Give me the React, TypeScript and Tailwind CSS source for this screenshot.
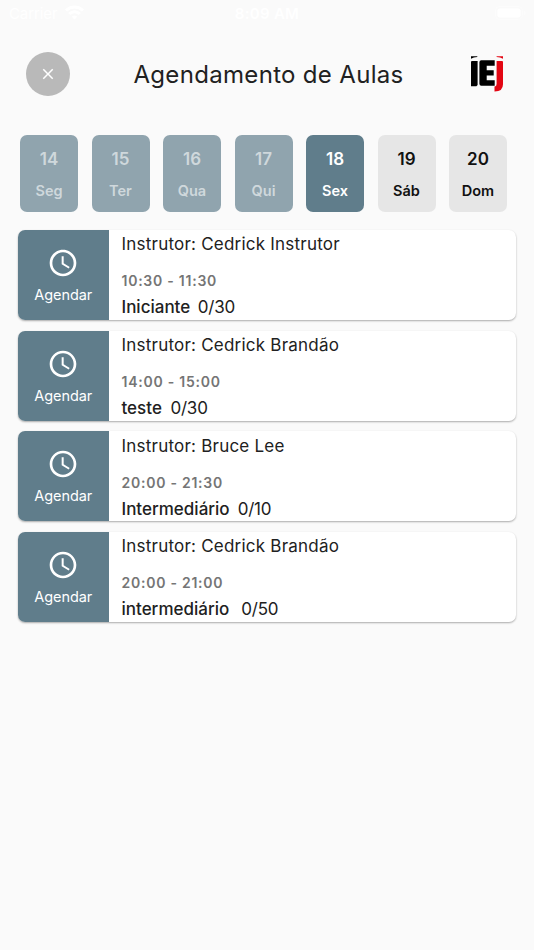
import { MdAccessTime, MdClose } from "react-icons/md";

type Day = {
  number: number;
  label: string;
  state: "past" | "selected" | "upcoming";
};

type Lesson = {
  id: number;
  instructor: string;
  time: string;
  level: string;
  spots: string;
  spotsClass: string;
};

const days: Day[] = [
  { number: 14, label: "Seg", state: "past" },
  { number: 15, label: "Ter", state: "past" },
  { number: 16, label: "Qua", state: "past" },
  { number: 17, label: "Qui", state: "past" },
  { number: 18, label: "Sex", state: "selected" },
  { number: 19, label: "Sáb", state: "upcoming" },
  { number: 20, label: "Dom", state: "upcoming" },
];

const lessons: Lesson[] = [
  { id: 1, instructor: "Cedrick Instrutor", time: "10:30 - 11:30", level: "Iniciante", spots: "0/30", spotsClass: "ml-[7.5px]" },
  { id: 2, instructor: "Cedrick Brandão", time: "14:00 - 15:00", level: "teste", spots: "0/30", spotsClass: "ml-[8.5px]" },
  { id: 3, instructor: "Bruce Lee", time: "20:00 - 21:30", level: "Intermediário", spots: "0/10", spotsClass: "ml-[8px]" },
  { id: 4, instructor: "Cedrick Brandão", time: "20:00 - 21:00", level: "intermediário", spots: "0/50", spotsClass: "ml-[12px]" },
];

const dayStyles = {
  past: "bg-[#90a4ae] text-[#cfd8dc]",
  selected: "bg-[#607d8b] text-white",
  upcoming: "bg-[#e6e6e6] text-[#111]",
};

function StatusBar() {
  return (
    <div className="grid h-[28px] grid-cols-3 items-center px-[9px] text-[15px] text-white">
      <div className="flex items-center gap-[7px]">
        <span className="w-[49px] tracking-[-0.1px]">Carrier</span>
        <svg className="-mt-[3px]" width="19" height="15" viewBox="0 0 19 15" fill="none" stroke="currentColor" strokeWidth="3">
          <path d="M1 5.5a12 12 0 0 1 17 0M4.2 9a7.5 7.5 0 0 1 10.6 0" />
          <path d="M9.5 14.5 6.8 11.8a4 4 0 0 1 5.4 0Z" fill="currentColor" stroke="none" />
        </svg>
      </div>
      <span className="text-center font-semibold tracking-[0.3px]">8:09 AM</span>
      <svg className="-mr-[1px] -mt-[2px] justify-self-end" width="31" height="15" viewBox="0 0 31 15">
        <rect x="0.5" y="0.5" width="27" height="13" rx="4" fill="none" stroke="#fcfcfc" />
        <rect x="2.5" y="2.5" width="23" height="9" rx="2" fill="white" />
        <path d="M29 5v4q1.5-.5 1.5-2T29 5" fill="#fcfcfc" />
      </svg>
    </div>
  );
}

function Logo() {
  return (
    <svg width="34" height="36" viewBox="0 0 34 36" role="img" aria-label="IEJ">
      <path d="M1 0.3h6.3v.6Q3.5 1 1 2.8Z" fill="#000" />
      <path d="M1 6Q1 5 2 5h5.6v24L6.4 30.3H1Z" fill="#000" />
      <path d="M11.3 4.3h13.4v5.4h-8v4.5h7v5.2h-7v4.9h8v5.4H11.3Q9.4 29.7 9.4 27.8V6.2Q9.4 4.3 11.3 4.3Z" fill="#000" />
      <path d="M26.6 0.3H33v2.5Q30.3 1 26.6.9Z" fill="#e30613" />
      <path d="M26.6 5H32Q33 5 33 6v22.2Q33 35.6 24.5 35.5v-4.9Q26.6 30.6 26.6 28Z" fill="#e30613" />
    </svg>
  );
}

function DayButton({ day }: { day: Day }) {
  return (
    <button
      type="button"
      className={`flex h-[77.5px] w-[58px] flex-col items-center rounded-[7px] pt-[14.5px] font-semibold ${dayStyles[day.state]}`}
    >
      <span className="text-[17px] leading-[21px]">{day.number}</span>
      <span className="mt-[12px] text-[14.5px] leading-[18px]">{day.label}</span>
    </button>
  );
}

function LessonCard({ lesson }: { lesson: Lesson }) {
  return (
    <li className="flex h-[90px] overflow-hidden rounded-[7px] bg-white shadow-[0_1px_2px_rgba(0,0,0,0.32)]">
      <button type="button" className="flex w-[90.5px] shrink-0 flex-col items-center bg-[#607d8b] pt-[17px] text-white">
        <MdAccessTime size={32} />
        <span className="mt-[7px] text-[14.5px] leading-[18px] tracking-[-0.05px]">Agendar</span>
      </button>
      <div className="flex flex-col whitespace-nowrap pl-[13px] pt-[3.3px] text-[17px] text-[#212121]">
        <span className="leading-[22px] tracking-[0.22px]">Instrutor: {lesson.instructor}</span>
        <span className="mt-[17px] text-[14px] font-semibold leading-[18px] tracking-[0.75px] text-[#757575]">{lesson.time}</span>
        <div className="mt-[6px] flex leading-[22px]">
          <span className="font-medium">{lesson.level}</span>
          <span className={`tracking-[-0.2px] ${lesson.spotsClass}`}>{lesson.spots}</span>
        </div>
      </div>
    </li>
  );
}

export default function App() {
  return (
    <main className="min-h-[950px] w-[534px] bg-[#fafafa] font-['Inter','Liberation_Sans',sans-serif]">
      <StatusBar />
      <header className="flex h-[92px] items-center justify-between pl-[26px] pr-[30px]">
        <button type="button" aria-label="Fechar" className="flex size-[44px] items-center justify-center rounded-full bg-[#b9b9b9] text-white">
          <MdClose size={18} />
        </button>
        <h1 className="-ml-[3px] whitespace-nowrap pt-[2px] text-[24px] tracking-[0.32px] text-[#212121]">Agendamento de Aulas</h1>
        <Logo />
      </header>
      <nav className="mt-[14.6px] flex gap-[13.5px] pl-[20px]">
        {days.map((day) => (
          <DayButton key={day.number} day={day} />
        ))}
      </nav>
      <ul className="mt-[18.1px] flex flex-col gap-[10.6px] px-[18px]">
        {lessons.map((lesson) => (
          <LessonCard key={lesson.id} lesson={lesson} />
        ))}
      </ul>
    </main>
  );
}
